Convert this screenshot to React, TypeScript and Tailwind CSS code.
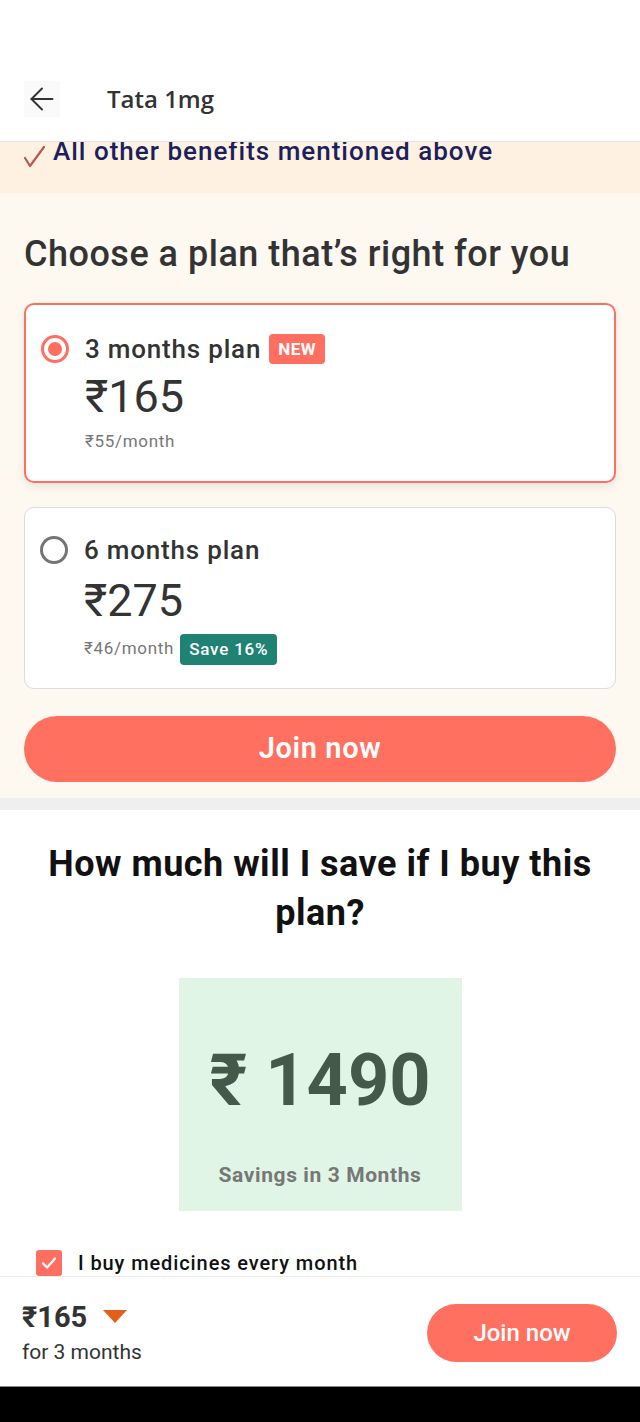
import { ArrowLeft } from "lucide-react";

const roboto = { fontFamily: "Roboto, 'Liberation Sans', sans-serif" };

function Radio({ checked }: { checked: boolean }) {
  if (checked) {
    return (
      <div className="flex h-[28px] w-[28px] shrink-0 items-center justify-center rounded-full border-[3px] border-[#ff6f61]">
        <div className="h-[14px] w-[14px] rounded-full bg-[#ff6f61]" />
      </div>
    );
  }
  return (
    <div className="h-[28px] w-[28px] shrink-0 rounded-full border-[3px] border-[#757575]" />
  );
}

interface PlanProps {
  title: string;
  price: string;
  perMonth: string;
  selected?: boolean;
  tag?: string;
  save?: string;
}

function PlanCard({ title, price, perMonth, selected, tag, save }: PlanProps) {
  return (
    <div
      className={`rounded-[10px] bg-white ${
        selected
          ? "h-[180px] border-2 border-[#ff6f61] pl-[15px] pt-[26px] shadow-[0_4px_8px_rgba(0,0,0,0.08)]"
          : "h-[182px] border border-[#dcdcdc] pl-[15px] pt-[24px]"
      }`}
    >
      <div className="flex h-[36px] items-center gap-[16px]">
        <Radio checked={!!selected} />
        <div className="flex items-center gap-[8px]">
          <span className="text-[26px] font-medium tracking-[0.8px] text-[#333]">{title}</span>
          {tag && (
            <span className="rounded-[4px] bg-[#ff6f61] px-[9px] py-[2px] text-[17px] font-bold leading-[26px] tracking-[0.5px] text-white">
              {tag}
            </span>
          )}
        </div>
      </div>
      <div className="pl-[44px]">
        <div className={`h-[52px] text-[45px] leading-[52px] text-[#333] ${selected ? "mt-[4px]" : "mt-[7px]"}`}>
          {price}
        </div>
        <div className={`flex h-[34px] items-center gap-[6px] ${selected ? "mt-[2px]" : "mt-[5px]"}`}>
          <span className="text-[17px] tracking-[0.7px] text-[#777]">{perMonth}</span>
          {save && (
            <span className="rounded-[4px] bg-[#1f8272] px-[9px] text-[17px] font-medium leading-[31px] tracking-[0.8px] text-white">
              {save}
            </span>
          )}
        </div>
      </div>
    </div>
  );
}

export default function App() {
  return (
    <div className="flex h-[1422px] w-[640px] flex-col overflow-hidden bg-white" style={roboto}>
      {/* header */}
      <div className="h-[142px] shrink-0 border-b border-[#e2e2e2] bg-white pt-[56px]">
        <div className="flex h-[85px] items-center">
          <div className="ml-[24px] flex h-[36px] w-[36px] items-center justify-center bg-[#fafafa]">
            <ArrowLeft size={36} strokeWidth={1.3} color="#333" />
          </div>
          <div
            className="ml-[47px] text-[24px] font-semibold text-[#333]"
            style={{ fontFamily: "'Open Sans', sans-serif" }}
          >
            Tata 1mg
          </div>
        </div>
      </div>

      {/* scroll area */}
      <div className="flex-1 overflow-hidden">
        <div className="h-[51px] overflow-hidden bg-[#fff1e2] px-[23px]">
          <div className="-mt-[8px] flex h-[34px] items-center gap-[6px]">
            <svg width="24" height="24" viewBox="0 0 24 24" className="mt-[12px]">
              <path d="M2 13 L7 21 L21 2" fill="none" stroke="#b9594b" strokeWidth="2.2" strokeLinecap="round" strokeLinejoin="round" />
            </svg>
            <span className="text-[26px] font-medium tracking-[1px] text-[#1b1f5c]">
              All other benefits mentioned above
            </span>
          </div>
        </div>

        <div className="bg-[#fdf8f0] px-[24px] pb-[16px] pt-[41px]">
          <h2 className="text-[36px] font-medium leading-[40px] tracking-[0.5px] text-[#333]">
            Choose a plan that’s right for you
          </h2>
          <div className="mt-[29px] flex flex-col gap-[24px]">
            <PlanCard title="3 months plan" tag="NEW" price="₹165" perMonth="₹55/month" selected />
            <PlanCard title="6 months plan" price="₹275" perMonth="₹46/month" save="Save 16%" />
          </div>
          <button className="mt-[27px] flex h-[66px] w-full items-center justify-center rounded-full bg-[#ff7061] text-[29px] font-semibold tracking-[0.6px] text-white">
            Join now
          </button>
        </div>

        <div className="h-[12px] bg-[#efefef]" />

        <div className="bg-white pt-[30px]">
          <h2 className="px-[30px] text-center text-[36px] font-bold leading-[49px] tracking-[0.5px] text-[#111]">
            How much will I save if I buy this plan?
          </h2>
          <div className="mt-[40px] flex justify-center">
            <div className="flex h-[233px] w-[283px] flex-col items-center bg-[#e0f5e6]">
              <div className="mt-[63px] text-[72px] font-bold leading-[80px] text-[#44594a]">₹ 1490</div>
              <div className="mt-[39px] text-[21px] font-bold tracking-[0.6px] text-[#777]">
                Savings in 3 Months
              </div>
            </div>
          </div>
          <div className="ml-[36px] mt-[37px] flex items-center gap-[16px]">
            <div className="flex h-[26px] w-[26px] items-center justify-center rounded-[3px] bg-[#ff6f61]">
              <svg width="18" height="18" viewBox="0 0 24 24">
                <path d="M4 12.5 L9.5 18 L20 6" fill="none" stroke="#fff" strokeWidth="3" strokeLinecap="round" strokeLinejoin="round" />
              </svg>
            </div>
            <span className="text-[20px] font-medium tracking-[0.9px] text-[#111]">
              I buy medicines every month
            </span>
          </div>
        </div>
      </div>

      {/* bottom bar */}
      <div className="flex h-[110px] shrink-0 items-center justify-between border-t border-[#ececec] bg-white pl-[22px] pr-[23px]">
        <div>
          <div className="flex items-center gap-[16px]">
            <span className="text-[29px] font-bold leading-[38px] text-[#333]">₹165</span>
            <svg width="24" height="14" viewBox="0 0 24 14">
              <path d="M0 0 H24 L12 13 Z" fill="#e35d1c" />
            </svg>
          </div>
          <div className="mt-[2px] text-[21px] leading-[28px] text-[#333]">for 3 months</div>
        </div>
        <button className="mt-[2px] flex h-[58px] w-[190px] items-center justify-center rounded-full bg-[#ff7061] text-[24px] font-medium text-white">
          Join now
        </button>
      </div>

      <div className="h-[36px] shrink-0 border-t border-[#888] bg-black" />
    </div>
  );
}
